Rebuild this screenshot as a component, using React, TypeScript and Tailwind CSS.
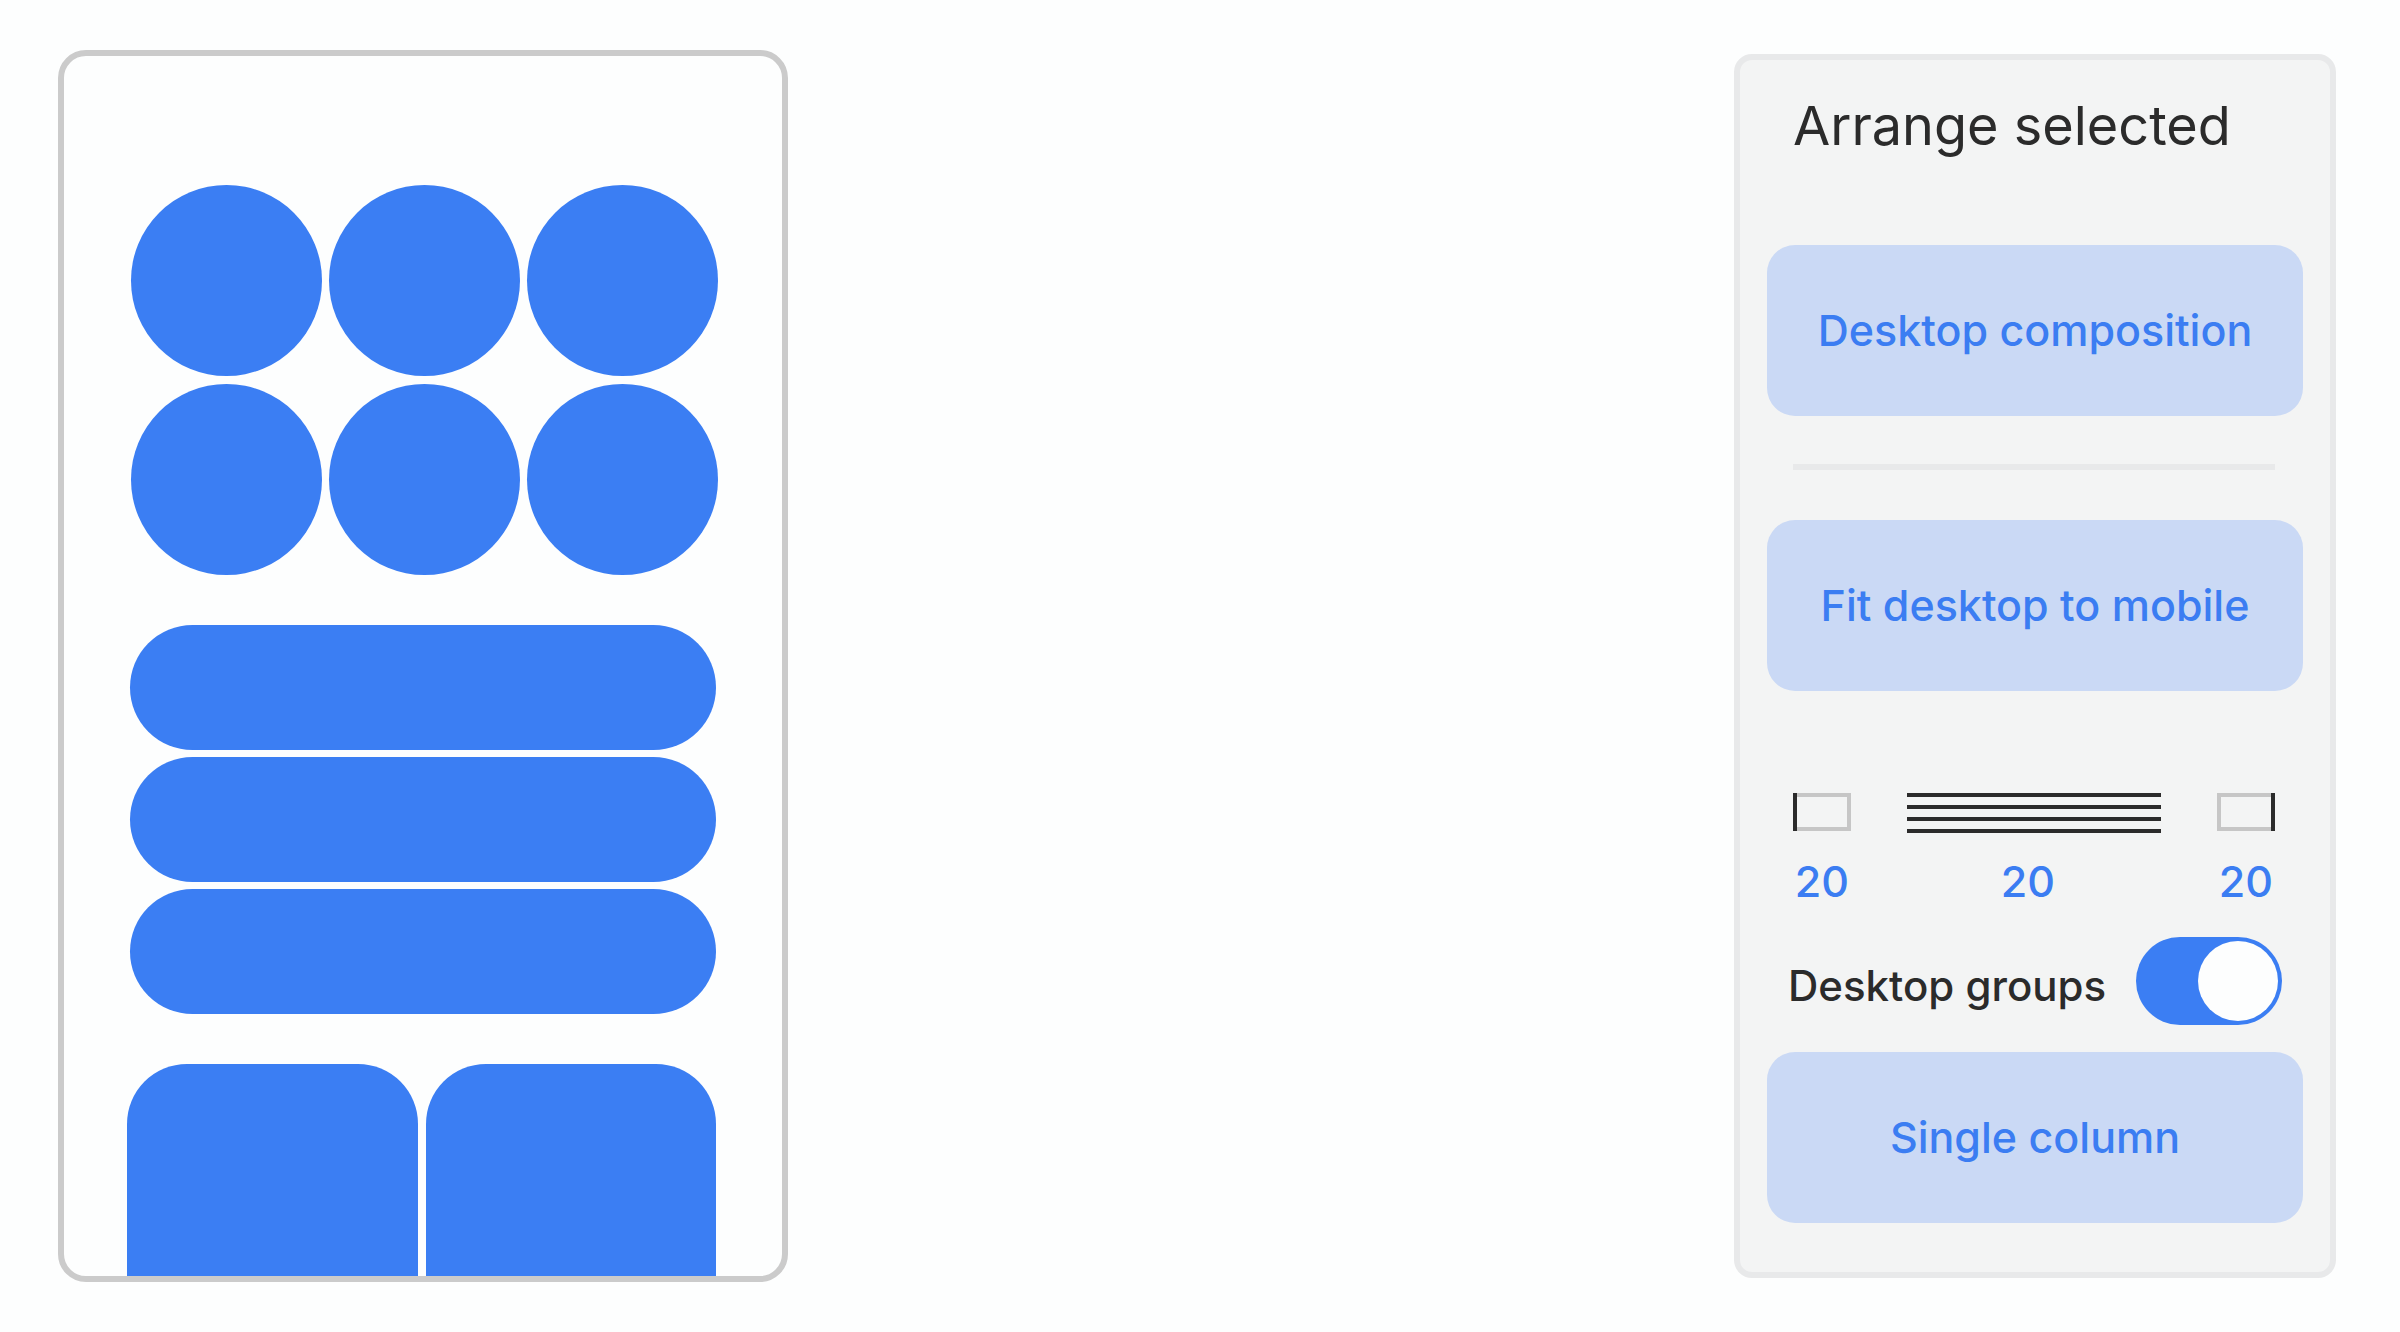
import { useState } from 'react';

const CIRCLES = [1, 2, 3, 4, 5, 6];
const PILLS = [1, 2, 3];
const CARDS = [1, 2];

function ArrangeButton({ label, active, onClick }: { label: string; active: boolean; onClick: () => void }) {
    return (
        <button type="button" onClick={onClick} aria-pressed={active}
            className="w-full h-[171px] rounded-[28px] bg-[#cad9f5] text-[43px] font-medium text-[#3b7df2] hover:bg-[#bdd0f4]">
            {label}
        </button>
    );
}

function GapInput({ label, value, onChange }: { label: string; value: string; onChange: (v: string) => void }) {
    return (
        <input type="text" inputMode="numeric" aria-label={label} value={value}
            onChange={e => onChange(e.target.value)}
            className="w-full h-14 bg-transparent text-center text-[43px] font-medium text-[#3b7df2] outline-none" />
    );
}

function MobilePreview() {
    return (
        <section aria-label="Mobile preview"
            className="w-full max-w-[730px] flex flex-col gap-[50px] pt-[129px] border-6 border-[#cbcbcb] rounded-[28px] overflow-hidden">
            <div className="grid grid-cols-3 gap-x-[7px] gap-y-2 pl-[67px] pr-16">
                {CIRCLES.map(n => <div key={n} className="aspect-square rounded-full bg-[#3b7ef3]" />)}
            </div>
            <div className="flex flex-col gap-[7px] px-[66px]">
                {PILLS.map(n => <div key={n} className="h-[125px] rounded-full bg-[#3b7ef3]" />)}
            </div>
            <div className="grow grid grid-cols-2 gap-2 pl-[63px] pr-[66px]">
                {CARDS.map(n => <div key={n} className="min-h-[200px] rounded-t-[60px] bg-[#3b7ef3]" />)}
            </div>
        </section>
    );
}

export default function App() {

    const [mode,   setMode]   = useState('');
    const [left,   setLeft]   = useState('20');
    const [rows,   setRows]   = useState('20');
    const [right,  setRight]  = useState('20');
    const [groups, setGroups] = useState(true);

    return (
        <main className="min-h-screen flex justify-between gap-10 bg-[#fdfefe] py-[50px] pl-[58px] pr-16 font-['Inter',sans-serif]">
            <MobilePreview />

            <aside className="w-[602px] shrink-0 my-1 px-[27px] pt-[34px] pb-[49px] bg-[#f3f4f4] border-6 border-[#e8e9ea] rounded-[18px]">
                <h1 className="px-[26px] mb-[87px] text-[54px] leading-[64px] text-[#2b2b2b]">Arrange selected</h1>

                <ArrangeButton label="Desktop composition" active={mode === 'desktop'} onClick={() => setMode('desktop')} />
                <hr className="ml-[26px] mr-7 mt-12 mb-[50px] border-t-6 border-[#e8e9ea]" />
                <ArrangeButton label="Fit desktop to mobile" active={mode === 'fit'} onClick={() => setMode('fit')} />

                <div className="flex justify-between pl-[26px] pr-7 mt-[102px]">
                    <div className="w-[58px] flex flex-col gap-5">
                        <svg viewBox="0 0 58 40" className="h-10" fill="none" strokeWidth="4">
                            <path d="M4 2H56V36H4" stroke="#c6c6c6" />
                            <path d="M2 0V38" stroke="#2b2b2b" />
                        </svg>
                        <GapInput label="Left margin" value={left} onChange={setLeft} />
                    </div>
                    <div className="w-[254px] flex flex-col gap-5">
                        <svg viewBox="0 0 254 40" className="h-10" fill="none" stroke="#2b2b2b" strokeWidth="4">
                            <path d="M0 2H254M0 14H254M0 26H254M0 38H254" />
                        </svg>
                        <div className="pr-3">
                            <GapInput label="Row gap" value={rows} onChange={setRows} />
                        </div>
                    </div>
                    <div className="w-[58px] flex flex-col gap-5">
                        <svg viewBox="0 0 58 40" className="h-10" fill="none" strokeWidth="4">
                            <path d="M54 2H2V36H54" stroke="#c6c6c6" />
                            <path d="M56 0V38" stroke="#2b2b2b" />
                        </svg>
                        <GapInput label="Right margin" value={right} onChange={setRight} />
                    </div>
                </div>

                <div className="flex items-center justify-between px-[21px] mt-7 mb-[27px]">
                    <label htmlFor="groups" className="pt-2 text-[42px] font-medium text-[#2b2b2b]">Desktop groups</label>
                    <input id="groups" type="checkbox" role="switch" checked={groups} onChange={e => setGroups(e.target.checked)}
                        className="appearance-none flex items-center w-[146px] h-[88px] px-1 rounded-full bg-[#b9bcc2] checked:bg-[#3b7ef3] checked:justify-end before:size-20 before:rounded-full before:bg-[#fdfefe]" />
                </div>

                <ArrangeButton label="Single column" active={mode === 'single'} onClick={() => setMode('single')} />
            </aside>
        </main>
    );
}
